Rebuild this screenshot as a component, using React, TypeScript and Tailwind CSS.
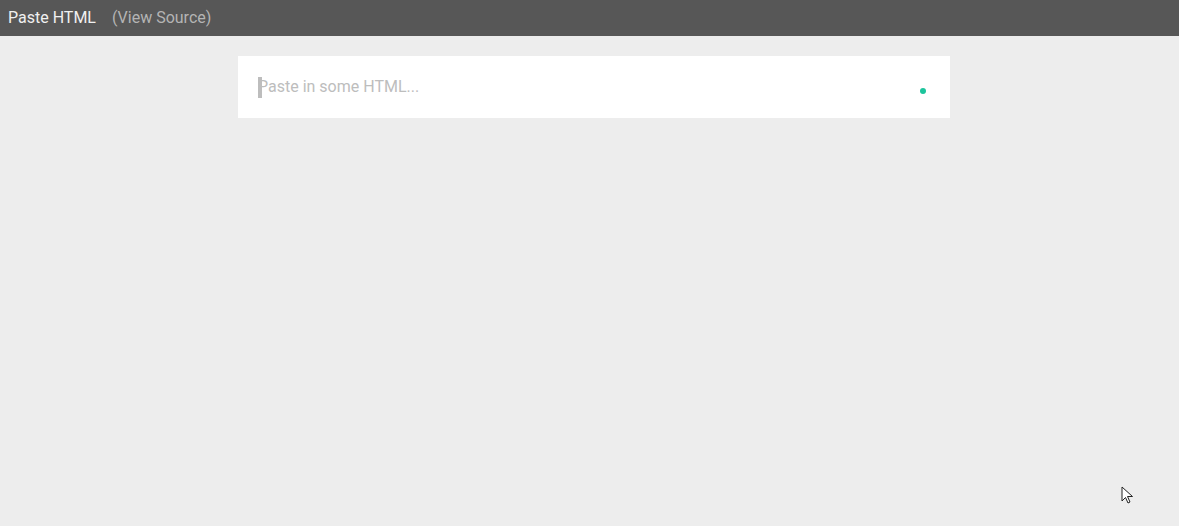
import React from 'react';

export default function App() {
  return (
    <div className="relative h-[526px] w-full bg-[#ededed] font-['Roboto',sans-serif] overflow-hidden">
      <header className="flex h-9 items-center bg-[#575757] px-2 text-base">
        <span className="text-[#f0f0f0]">Paste HTML</span>
        <span className="ml-4 text-[#b4b4b4]">(View Source)</span>
      </header>

      <div className="ml-[238px] mt-5 flex h-[62px] w-[712px] items-center bg-white pl-5 pr-[24px]">
        <div className="flex flex-1 items-center text-base text-[#bdbdbd]">
          <span className="mr-[-4px] h-[21px] w-1 bg-[#bdbdbd]" />
          <span>Paste in some HTML...</span>
        </div>
        <span className="mt-[7px] h-[6px] w-[6px] rounded-full bg-[#1cc49c]" />
      </div>

      {/* mouse pointer */}
      <svg className="absolute left-[1121px] top-[486px]" width="14" height="20" viewBox="0 0 14 20">
        <path d="M1 1 L1 15 L4.5 11.5 L7 17 L9 16 L6.5 10.5 L11.5 10.5 Z" fill="white" stroke="#222" strokeWidth="1" strokeLinejoin="round" />
      </svg>
    </div>
  );
}
